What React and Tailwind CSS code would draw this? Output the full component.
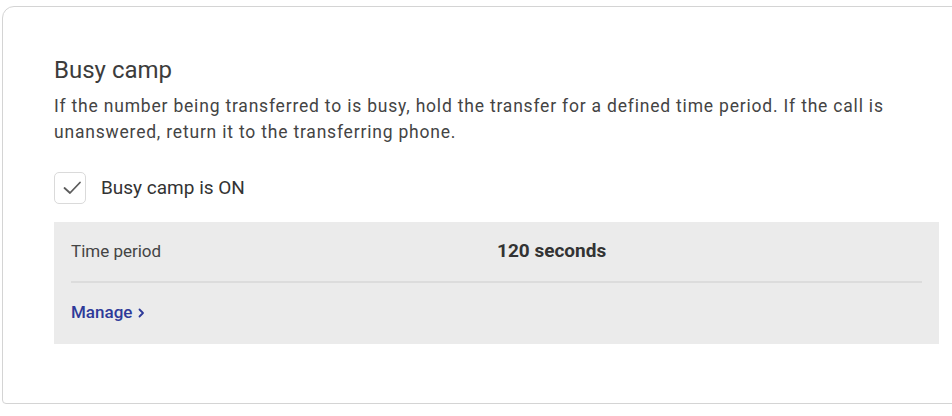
export default function App() {
  return (
    <div className="h-[416px] w-[952px] overflow-hidden bg-white pl-[2px] pt-[6px] font-['Roboto',sans-serif]">
      <div className="h-[398px] w-[980px] rounded-tl-xl rounded-bl-sm border border-[#d4d4d4] bg-white pl-[51px] pt-[49px]">
        <h2 className="text-[24px] leading-[28px] text-[#3c3c3c]">Busy camp</h2>
        <p className="mt-[9px] w-[880px] text-[17.5px] leading-[26px] tracking-[0.8px] text-[#444]">
          If the number being transferred to is busy, hold the transfer for a defined time period. If the call is
          unanswered, return it to the transferring phone.
        </p>
        <label className="mt-[27px] flex items-center gap-[15px]">
          <span className="flex h-[32px] w-[32px] items-center justify-center rounded-[5px] border border-[#dadada] bg-white">
            <svg width="30" height="30" viewBox="1 1 30 30" fill="none" stroke="#5c5c5c" strokeWidth="1.8" strokeLinecap="round" strokeLinejoin="round">
              <path d="M10.5 16l5.5 5 10-10.5" />
            </svg>
          </span>
          <span className="text-[19px] leading-[24px] text-[#333]">Busy camp is ON</span>
        </label>
        <div className="mt-[18px] h-[122px] w-[885px] bg-[#ebebeb] px-[17px]">
          <div className="flex h-[61px] items-center border-b-2 border-[#dcdcdc]">
            <span className="w-[426px] text-[17px] text-[#444]">Time period</span>
            <span className="text-[19px] font-bold text-[#333]">120 seconds</span>
          </div>
          <div className="flex h-[59px] items-center gap-[5px] text-[#2e3a99]">
            <span className="text-[17px] font-medium">Manage</span>
            <svg width="8" height="12" viewBox="0 0 8 12" fill="none" stroke="currentColor" strokeWidth="1.8" strokeLinecap="round" strokeLinejoin="round">
              <path d="M2.5 2.5l3.5 3.5-3.5 3.5" />
            </svg>
          </div>
        </div>
      </div>
    </div>
  );
}
